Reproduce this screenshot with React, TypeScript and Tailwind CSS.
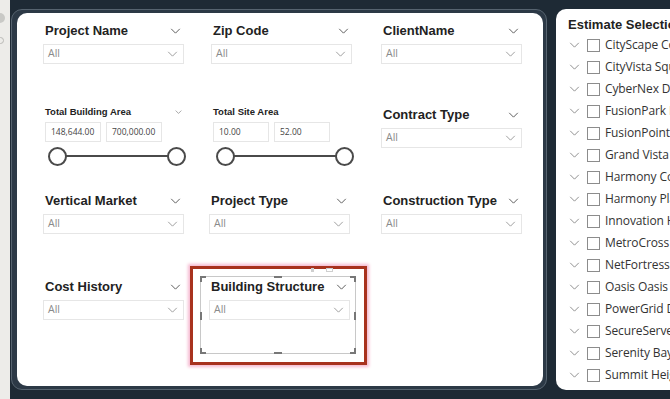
import React from "react";

const titleFont = { fontFamily: '"Liberation Sans", Arial, sans-serif' };

function Chevron({ className }: { className?: string }) {
    return (
        <svg viewBox="0 0 12 7" className={className} fill="none" stroke="currentColor" strokeWidth={1.1}>
            <path d="M1 1l5 5 5-5" />
        </svg>
    );
}

function Dropdown() {
    return (
        <div className="flex h-5 w-[141px] items-center justify-between border border-[#e6e6e6] bg-white pl-[4px] pr-[5px]">
            <span className="text-[10.5px] text-[#8a8a8a] font-['Open_Sans',sans-serif]">All</span>
            <Chevron className="h-[6px] w-[11px] text-[#9a9a9a]" />
        </div>
    );
}

function Slicer({ title }: { title: string }) {
    return (
        <div className="w-[141px]">
            <div className="flex h-5 items-center justify-between pl-[2px] pr-[3px]">
                <span className="text-[13px] font-bold text-[#222]" style={titleFont}>
                    {title}
                </span>
                <Chevron className="h-[6px] w-[11px] text-[#555]" />
            </div>
            <div className="mt-[3px]">
                <Dropdown />
            </div>
        </div>
    );
}

function RangeSlicer({ title, min, max, wide }: { title: string; min: string; max: string; wide?: boolean }) {
    return (
        <div className="w-[141px] pt-[1px]">
            <div className="flex h-[12px] items-center justify-between pl-[2px] pr-[2px]">
                <span className="text-[9.5px] font-bold text-[#222]" style={titleFont}>
                    {title}
                </span>
                {wide && <Chevron className="h-[4px] w-[7px] text-[#777]" />}
            </div>
            <div className="mt-[4px] flex gap-[5px] pl-[2px]">
                <div className="flex h-5 w-[56px] items-center border border-[#e6e6e6] pl-[5px] text-[8.5px] text-[#444] font-['Open_Sans',sans-serif]">
                    {min}
                </div>
                <div className="flex h-5 w-[56px] items-center border border-[#e6e6e6] pl-[5px] text-[8.5px] text-[#444] font-['Open_Sans',sans-serif]">
                    {max}
                </div>
            </div>
            <div className="relative mt-[4px] h-5 w-[141px]">
                <div className="absolute left-[16px] right-[8px] top-[9px] h-[2px] bg-[#4a4a4a]" />
                <div className="absolute left-[5px] top-[1px] h-[19px] w-[19px] rounded-full border-2 border-[#4a4a4a] bg-white" />
                <div className="absolute left-[124px] top-[1px] h-[19px] w-[19px] rounded-full border-2 border-[#4a4a4a] bg-white" />
            </div>
        </div>
    );
}

function SelectedVisual() {
    return (
        <div className="relative">
            {/* red highlight */}
            <div className="absolute -left-[21px] -top-[11px] h-[99px] w-[177px] border-[3px] border-[#a8321e] shadow-[0_0_3px_2px_#f5b9d0]" />
            {/* selection frame */}
            <div className="absolute -left-[11px] -top-[1px] h-[78px] w-[156px] border border-[#c8c8c8]">
                <div className="absolute -left-[1px] -top-[1px] h-[6px] w-[6px] border-l-2 border-t-2 border-[#777]" />
                <div className="absolute -right-[1px] -top-[1px] h-[6px] w-[6px] border-r-2 border-t-2 border-[#777]" />
                <div className="absolute -left-[1px] -bottom-[1px] h-[6px] w-[6px] border-l-2 border-b-2 border-[#777]" />
                <div className="absolute -right-[1px] -bottom-[1px] h-[6px] w-[6px] border-r-2 border-b-2 border-[#777]" />
                <div className="absolute left-[73px] -top-[1px] h-[2px] w-[8px] bg-[#777]" />
                <div className="absolute left-[73px] -bottom-[1px] h-[2px] w-[8px] bg-[#777]" />
                <div className="absolute -left-[1px] top-[35px] h-[8px] w-[2px] bg-[#777]" />
                <div className="absolute -right-[1px] top-[35px] h-[8px] w-[2px] bg-[#777]" />
                <div className="absolute left-[110px] -top-[9px] h-[4px] w-[3px] bg-[#cfcfcf]" />
                <div className="absolute left-[125px] -top-[9px] h-[4px] w-[7px] border border-[#cfcfcf]" />
            </div>
            <div className="relative -ml-[2px]">
                <Slicer title="Building Structure" />
            </div>
        </div>
    );
}

const estimates = [
    "CityScape Commons",
    "CityVista Square",
    "CyberNex Data Center",
    "FusionPark Plaza",
    "FusionPoint Tower",
    "Grand Vista Resort",
    "Harmony Commons",
    "Harmony Plaza",
    "Innovation Hub",
    "MetroCross Station",
    "NetFortress Data Hub",
    "Oasis Oasis Resort",
    "PowerGrid Datacenter",
    "SecureServe Facility",
    "Serenity Bay Villas",
    "Summit Heights",
];

export default function App() {
    return (
        <div className="flex h-[399px] w-[670px] overflow-hidden bg-[#1e2a35]">
            {/* left gutter */}
            <div className="relative h-full w-[10px] shrink-0 overflow-hidden bg-[#edece9]">
                <div className="absolute -left-[5px] top-[13px] h-[10px] w-[10px] rounded-full bg-[#c9c9c6]" />
                <div className="absolute -left-[3px] top-[37px] h-[7px] w-[7px] rounded-full border border-[#b9b9b6]" />
            </div>

            <div className="flex shrink-0 gap-[9px] pl-[1px] pt-[9px]">
                {/* filters panel */}
                <div className="h-[381px] w-[536px] shrink-0 rounded-[11px] border border-[#56636f] bg-[#2c3946] pb-[3px] pl-[5px] pr-[3px] pt-[3px]">
                    <div className="grid h-[373px] w-[526px] grid-cols-[168px_170px_141px] grid-rows-[84px_86px_86px_86px] rounded-[10px] bg-white pl-[26px] pt-[8px]">
                        <Slicer title="Project Name" />
                        <Slicer title="Zip Code" />
                        <Slicer title="ClientName" />

                        <RangeSlicer title="Total Building Area" min="148,644.00" max="700,000.00" wide />
                        <RangeSlicer title="Total Site Area" min="10.00" max="52.00" />
                        <Slicer title="Contract Type" />

                        <Slicer title="Vertical Market" />
                        <div className="-ml-[2px]">
                            <Slicer title="Project Type" />
                        </div>
                        <Slicer title="Construction Type" />

                        <Slicer title="Cost History" />
                        <SelectedVisual />
                        <div />
                    </div>
                </div>

                {/* estimate list */}
                <div className="h-[381px] w-[140px] shrink-0 overflow-hidden rounded-l-[10px] bg-white pl-[12px] pt-[7px]">
                    <div className="h-[18px] whitespace-nowrap text-[13px] font-bold leading-[18px] text-[#222]" style={titleFont}>
                        Estimate Selection
                    </div>
                    <div className="flex flex-col">
                        {estimates.map((name) => (
                            <div key={name} className="flex h-[22px] items-center whitespace-nowrap">
                                <Chevron className="ml-[1px] h-[6px] w-[11px] shrink-0 text-[#8a8a8a]" />
                                <div className="ml-[7px] h-[13px] w-[13px] shrink-0 border border-[#8c8c8c] bg-white" />
                                <span className="ml-[5px] text-[12px] tracking-[-0.1px] text-[#333] font-['Open_Sans',sans-serif]">{name}</span>
                            </div>
                        ))}
                    </div>
                </div>
            </div>
        </div>
    );
}
